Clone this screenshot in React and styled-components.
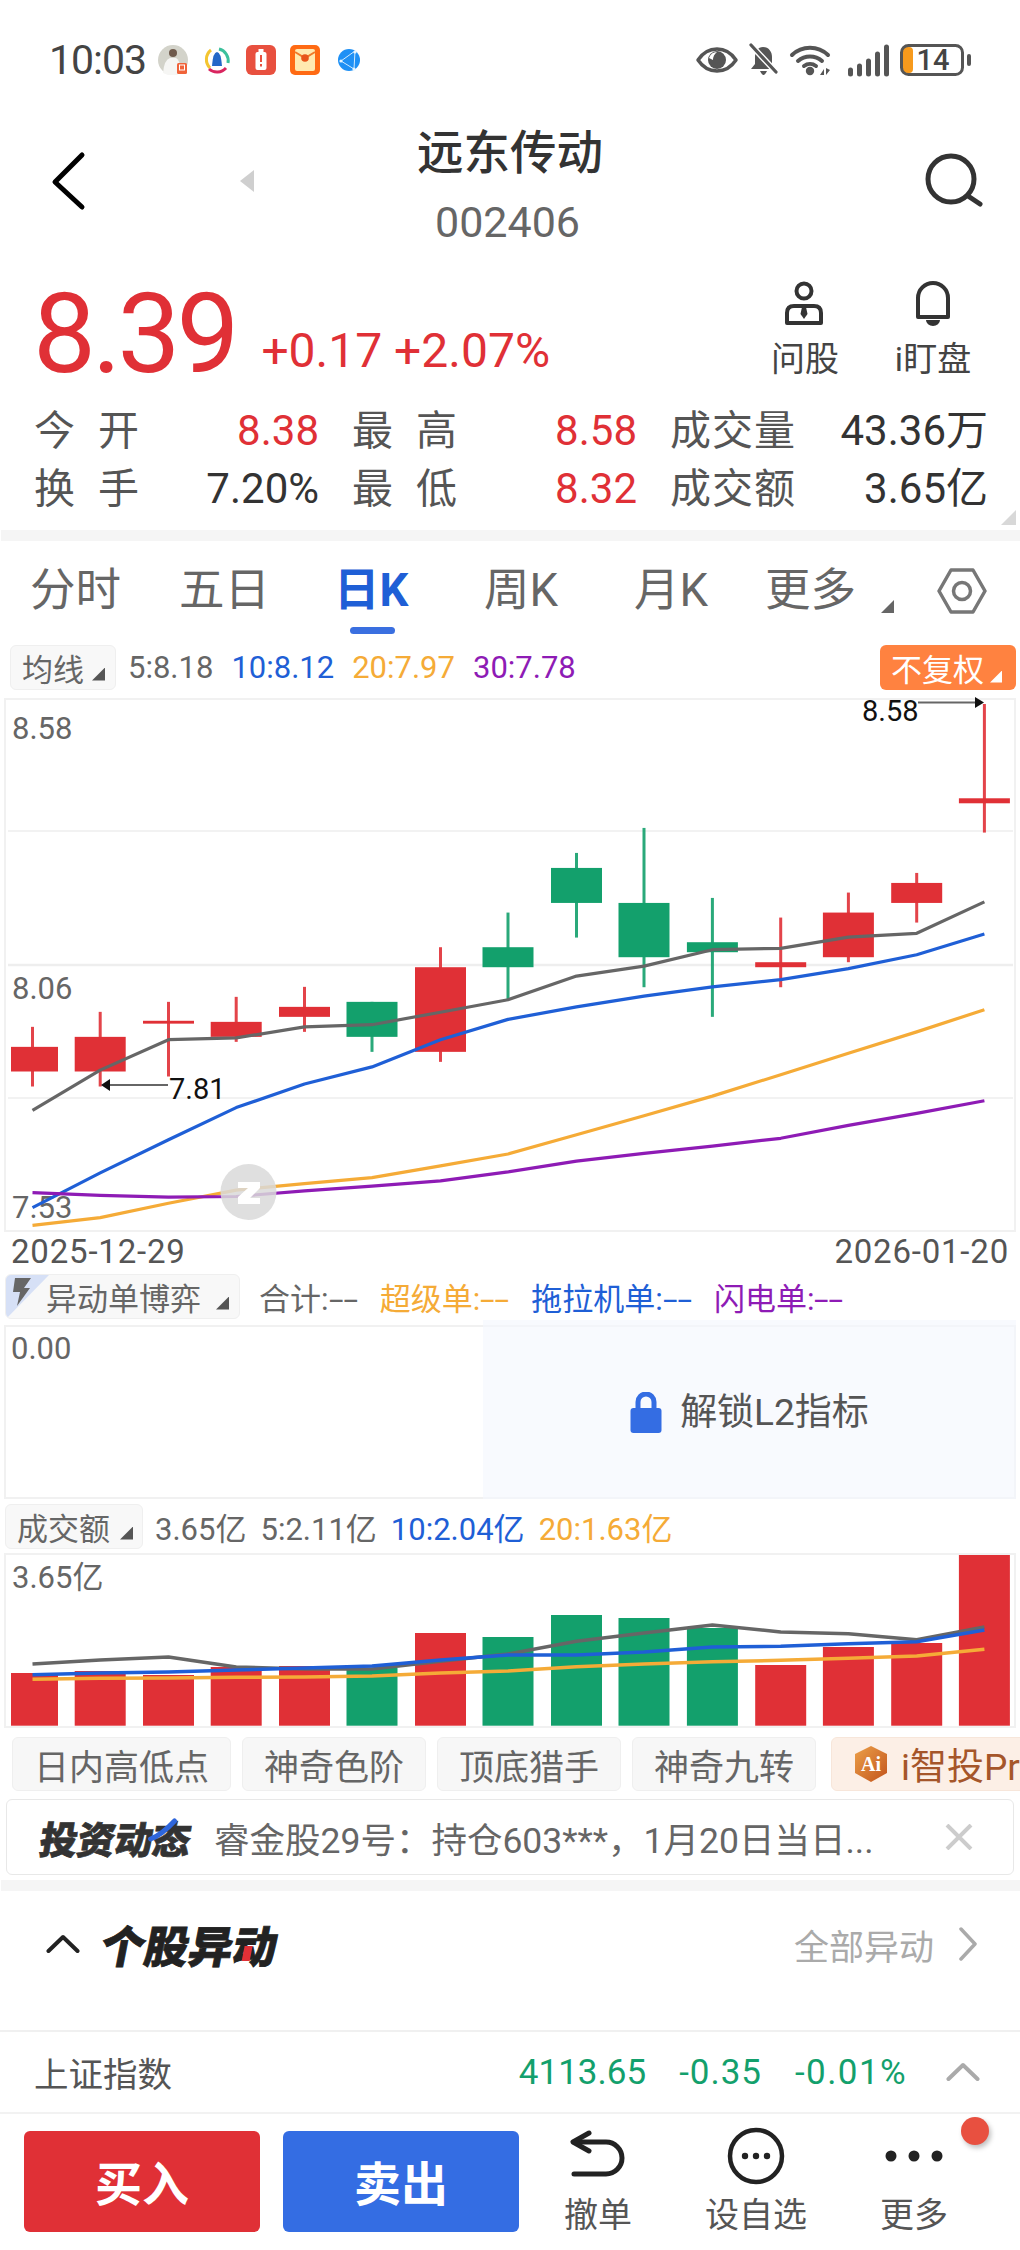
import React from 'react'
import styled, { createGlobalStyle } from 'styled-components'

const RED = '#e03036'
const GREEN = '#13a06c'
const BLUE = '#1f5fd6'
const ORANGE = '#f5ab37'
const PURPLE = '#8e1bb5'

const GlobalStyle = createGlobalStyle`
  html, body { margin: 0; padding: 0; background: #fff; }
  body { font-family: Roboto, "Noto Sans CJK SC", sans-serif; color: #333; }
  * { box-sizing: border-box; }
`

const Page = styled.div`
  width: 1020px;
  height: 2250px;
  overflow: hidden;
  background: #fff;
`

const StatusBar = styled.div`
  height: 120px;
  display: flex;
  align-items: center;
  justify-content: space-between;
  padding: 0 48px 0 49px;
`
const StatusGroup = styled.div`
  display: flex;
  align-items: center;
  gap: ${p => p.$gap || 0}px;
  svg { overflow: visible; }
`
const Clock = styled.span`
  width: 102px;
  font-size: 41px;
  letter-spacing: -1px;
  color: #444;
`

const Header = styled.div`
  height: 122px;
  display: grid;
  grid-template-columns: 1fr auto 1fr;
`
const HeaderLeft = styled.div`
  display: flex;
  align-items: center;
  gap: 150px;
  padding-left: 50px;
`
const HeaderRight = styled.div`
  display: flex;
  align-items: center;
  justify-content: flex-end;
  padding-right: 35px;
`
const TitleBlock = styled.div`
  display: flex;
  flex-direction: column;
  align-items: center;
  padding-top: 10px;
`
const Title = styled.div`
  font-size: 46.5px;
  line-height: 46px;
  font-weight: 500;
  color: #333;
`
const Code = styled.div`
  margin-top: 27px;
  padding-right: 5px;
  font-size: 43px;
  line-height: 38px;
  color: #666;
`

const PriceRow = styled.div`
  height: 159px;
  display: flex;
  padding: 0 27px 0 33px;
`
const Price = styled.div`
  margin-top: 37px;
  font-size: 112px;
  line-height: 110px;
  letter-spacing: -4px;
  color: ${RED};
`
const Change = styled.div`
  margin: 84px 0 0 26px;
  font-size: 48px;
  line-height: 50px;
  color: ${RED};
`
const Actions = styled.div`
  margin-left: auto;
  display: flex;
  gap: 8px;
  padding-top: 39px;
`
const Action = styled.div`
  width: 120px;
  display: flex;
  flex-direction: column;
  align-items: center;
  font-size: 34px;
  line-height: 40px;
  color: #444;
  svg { margin-bottom: 12px; }
`

const Stats = styled.div`
  position: relative;
  height: 129px;
  padding: 1px 0 0 34px;
`
const StatsRow = styled.div`
  height: 58px;
  display: grid;
  grid-template-columns: 285px 285px 318px;
  gap: 33px;
  align-items: center;
`
const Stat = styled.div`
  display: flex;
  justify-content: space-between;
  align-items: center;
  line-height: 58px;
`
const StatLabel = styled.span`
  font-size: 41px;
  letter-spacing: ${p => p.$spread ? 23 : 1}px;
  color: #555;
`
const StatValue = styled.span`
  font-size: 42px;
  color: ${p => p.$red ? RED : '#333'};
`
const Corner = styled.i`
  position: absolute;
  right: 4px;
  bottom: 5px;
  width: 15px;
  height: 15px;
  background: #d8d8d8;
  clip-path: polygon(100% 0, 100% 100%, 0 100%);
`
const Band = styled.div`
  height: 11px;
  margin-top: ${p => p.$mt || 0}px;
  margin-left: 1px;
  background: #f5f5f5;
`

const Tabs = styled.div`
  height: 104px;
  padding: 20px 33px 0 30px;
  display: grid;
  grid-template-columns: 149px 155px 150px 150px 131px 1fr;
  align-items: start;
`
const Tab = styled.div`
  position: relative;
  width: fit-content;
  font-size: 45.5px;
  line-height: 60px;
  font-weight: ${p => p.$active ? 700 : 400};
  color: ${p => p.$active ? BLUE : '#666'};
  ${p => p.$active && `
    &::after {
      content: '';
      position: absolute;
      left: 16px;
      bottom: -13px;
      width: 45px;
      height: 7px;
      border-radius: 4px;
      background: #3a6fe0;
    }
  `}
`
const TabMore = styled.div`
  display: flex;
  align-items: center;
  justify-content: space-between;
  height: 60px;
`
const MoreLabel = styled.div`
  display: flex;
  align-items: flex-end;
  gap: 25px;
  font-size: 45.5px;
  line-height: 60px;
  color: #666;
`

const Caret = styled.i`
  flex: none;
  width: ${p => p.$size || 13}px;
  height: ${p => p.$size || 13}px;
  margin-bottom: ${p => p.$mb || 8}px;
  background: ${p => p.$color || '#555'};
  align-self: flex-end;
  clip-path: polygon(100% 0, 100% 100%, 0 100%);
`
const IndicatorRow = styled.div`
  height: 44px;
  margin-top: ${p => p.$mt || 0}px;
  padding: 0 4px 0 ${p => p.$pl || 5}px;
  display: flex;
  align-items: center;
  gap: ${p => p.$gap || 18}px;
  font-size: 31px;
`
const Pill = styled.div`
  position: relative;
  height: 45px;
  overflow: hidden;
  display: flex;
  align-items: center;
  gap: ${p => p.$gap || 12}px;
  padding: 0 ${p => p.$pr || 10}px 0 ${p => p.$pl || 11}px;
  margin-right: ${p => p.$mr || 0}px;
  background: #f8f8f8;
  border: 1px solid #efefef;
  border-radius: 6px;
  color: #666;
  font-size: 31px;
`
const FlashMark = styled.svg`
  position: absolute;
  left: 0;
  top: 0;
`
const Reading = styled.span`
  color: ${p => p.$color || '#666'};
  white-space: nowrap;
`
const Dash = styled.span`
  display: inline-block;
  margin-right: 12px;
  transform: scaleX(1.7);
  transform-origin: left center;
`
const AdjustButton = styled.div`
  margin-left: auto;
  width: 136px;
  height: 45px;
  display: flex;
  align-items: center;
  gap: 6px;
  padding-left: 11px;
  border-radius: 6px;
  background: #ff8240;
  color: #fff;
  font-size: 31px;
`

const ChartSvg = styled.svg`
  display: block;
  overflow: visible;
  margin: 9px 0 0 4px;
`
const DateRow = styled.div`
  height: 38px;
  padding: 1px 11px 0;
  display: flex;
  align-items: center;
  justify-content: space-between;
  font-size: 33px;
  letter-spacing: .8px;
  color: #555;
`

const LockedBox = styled.div`
  position: relative;
  height: 174px;
  margin: 7px 4px 0;
  border: 2px solid #f1f1f1;
  padding: 7px 5px;
  font-size: 31px;
  line-height: 30px;
  color: #666;
`
const LockPanel = styled.div`
  position: absolute;
  top: -7px;
  right: -2px;
  bottom: -2px;
  width: 533px;
  background: rgba(244, 247, 254, .65);
  display: flex;
  align-items: center;
  justify-content: center;
  gap: 18px;
  padding-top: 7px;
  font-size: 37px;
  color: #555;
`
const VolumeSvg = styled.svg`
  display: block;
  margin: 5px 0 0 4px;
`

const ToolRow = styled.div`
  height: 54px;
  margin-top: 9px;
  padding-left: 12px;
  display: flex;
  gap: 11px;
  overflow: hidden;
`
const ToolButton = styled.div`
  flex: none;
  min-width: ${p => p.$w}px;
  display: flex;
  align-items: center;
  justify-content: center;
  background: #f7f7f7;
  border: 1px solid #efefef;
  border-radius: 6px;
  font-size: 35px;
  color: #666;
`
const ProButton = styled.div`
  flex: none;
  width: 230px;
  margin-left: 4px;
  padding-left: 21px;
  display: flex;
  align-items: center;
  gap: 12px;
  background: #fcefe6;
  border: 1px solid #f7e6da;
  border-radius: 6px;
  font-size: 37px;
  color: #a5562a;
  white-space: nowrap;
`

const NewsBar = styled.div`
  height: 76px;
  margin: 8px 6px 0;
  padding: 0 40px 0 29px;
  display: flex;
  align-items: center;
  border: 1px solid #e8e8e8;
  border-radius: 6px;
`
const LogoText = styled.div`
  position: relative;
  width: 178px;
  font-size: 38px;
  font-weight: 900;
  letter-spacing: -.4px;
  color: #333;
  -webkit-text-stroke: .7px #333;
  transform: skewX(-9deg);
  transform-origin: left bottom;
`
const Swoosh = styled.svg`
  position: absolute;
  left: 106px;
  top: 8px;
  transform: skewX(9deg);
`
const NewsText = styled.div`
  flex: 1;
  font-size: 35.5px;
  color: #666;
  white-space: nowrap;
`

const SectionHead = styled.div`
  height: 141px;
  padding: 23px 42px 0 46px;
  display: flex;
  align-items: flex-start;
  border-bottom: 2px solid #f0f0f0;
`
const HeadLeft = styled.div`
  display: flex;
  align-items: center;
  gap: 22px;
  height: 60px;
`
const HeadTitle = styled.div`
  position: relative;
  font-size: 44px;
  font-weight: 900;
  color: #222;
  -webkit-text-stroke: .8px #222;
  transform: skewX(-11deg);
`
const RedTick = styled.i`
  position: absolute;
  left: 143px;
  top: 34px;
  width: 8px;
  height: 15px;
  background: ${RED};
`
const HeadRight = styled.div`
  margin-left: auto;
  height: 60px;
  display: flex;
  align-items: center;
  gap: 24px;
  font-size: 35px;
  color: #aaa;
`

const IndexRow = styled.div`
  height: 82px;
  padding: 0 40px 0 34px;
  display: flex;
  align-items: center;
  gap: 33px;
  border-bottom: 2px solid #f2f2f2;
`
const IndexName = styled.div`
  margin-right: auto;
  font-size: 34.5px;
  color: #555;
`
const IndexValue = styled.div`
  font-size: 35px;
  letter-spacing: ${p => p.$ls || 0}px;
  color: ${GREEN};
`
const IndexCaret = styled.div`
  display: flex;
  margin-left: 6px;
`

const BottomBar = styled.div`
  padding: 17px 0 0 24px;
  display: flex;
  gap: 23px;
`
const TradeButton = styled.div`
  width: 236px;
  height: 101px;
  padding-bottom: 2px;
  display: flex;
  align-items: center;
  justify-content: center;
  border-radius: 6px;
  background: ${p => p.$sell ? '#346de3' : RED};
  color: #fff;
  font-size: 47px;
  font-weight: 700;
`
const BarTools = styled.div`
  margin: -7px 0 0 -23px;
  display: grid;
  grid-template-columns: repeat(3, 158px);
`
const BarTool = styled.div`
  position: relative;
  display: flex;
  flex-direction: column;
  align-items: center;
  font-size: 34px;
  line-height: 40px;
  color: #555;
  svg { margin-bottom: 7px; }
`
const RedDot = styled.i`
  position: absolute;
  right: 4px;
  top: -7px;
  width: 28px;
  height: 28px;
  border-radius: 50%;
  background: #e85040;
  box-shadow: 2px 3px 5px rgba(0, 0, 0, .25);
`

// chart data read off the reference, in zoom units
const cy = v => 690 + v / 2.8
const vy = v => 1250 + v / 3
const centers = [32.5, 100.2, 168.5, 236.2, 304.5, 372, 440.5, 508, 576.5, 644, 712.4, 780.7, 848.4, 916.7, 984.4]

const candles = [
  [946, 1113, 1002, 1071, 'r'], [904, 1113, 974, 1071, 'r'], [876, 1085, 929, 937, 'r'],
  [862, 988, 932, 974, 'r'], [834, 960, 890, 918, 'r'], [876, 1016, 876, 974, 'g'],
  [723, 1044, 779, 1016, 'r'], [626, 870, 723, 779, 'g'], [459, 696, 501, 599, 'g'],
  [389, 835, 599, 751, 'g'], [585, 918, 709, 737, 'g'], [640, 835, 765, 779, 'r'],
  [570, 765, 626, 751, 'r'], [515, 654, 543, 599, 'r'], [42, 402, 306, 320, 'r'],
]
const ma5 = [1180, 1067, 982, 977, 946, 940, 905, 870, 804, 776, 730, 726, 695, 684, 596]
const ma10 = [1452, 1355, 1262, 1172, 1106, 1058, 982, 925, 890, 860, 834, 814, 783, 744, 686]
const ma20 = [1502, 1480, 1440, 1403, 1385, 1368, 1335, 1302, 1248, 1195, 1140, 1080, 1020, 960, 898]
const ma30 = [1410, 1418, 1423, 1421, 1405, 1392, 1377, 1352, 1322, 1300, 1280, 1258, 1222, 1188, 1153]

const volumes = [1275, 1269, 1281, 1257, 1254, 1260, 1155, 1167, 1101, 1110, 1140, 1251, 1197, 1185, 921]
const volColors = 'rrrrrgrggggrrrr'
const vol5 = [1248, 1236, 1227, 1257, 1263, 1263, 1240, 1218, 1180, 1155, 1131, 1152, 1157, 1175, 1137]
const vol10 = [1280, 1275, 1272, 1266, 1260, 1254, 1236, 1221, 1221, 1212, 1197, 1195, 1187, 1181, 1146]
const vol20 = [1294, 1291, 1290, 1288, 1287, 1284, 1275, 1269, 1256, 1248, 1241, 1237, 1231, 1224, 1204]

const line = (data, fn) => data.map((v, i) => `${centers[i]},${fn(v).toFixed(1)}`).join(' ')
const colorOf = c => (c === 'g' ? GREEN : RED)

function bodyRect(i) {
  return i === 0 ? { x: 11, width: 47 } : { x: centers[i] - 25.5, width: 51 }
}

function MaLine({ data, color, fn, width = 3.2 }) {
  return <polyline points={line(data, fn)} fill="none" stroke={color} strokeWidth={width} strokeLinejoin="round" />
}

function KChart() {
  return (
    <ChartSvg width="1012" height="534" viewBox="4 699 1012 534">
      <rect x="5" y="700" width="1010" height="532" fill="#fff" stroke="#f1f1f1" strokeWidth="2" />
      <line x1="8" x2="1013" y1="832" y2="832" stroke="#eee" strokeWidth="1.5" />
      <line x1="8" x2="1013" y1="966" y2="966" stroke="#eee" strokeWidth="2.5" />
      <line x1="8" x2="1013" y1="1099" y2="1099" stroke="#eee" strokeWidth="1.5" />
      <text x="12" y="740" fontSize="31" fill="#666">8.58</text>
      <text x="12" y="1000" fontSize="31" fill="#666">8.06</text>
      <text x="12" y="1219" fontSize="31" fill="#666">7.53</text>
      {candles.map(([wt, wb, bt, bb, c], i) => (
        <g key={i} fill={colorOf(c)}>
          <rect x={centers[i] - 1.5} y={cy(wt)} width="3" height={cy(wb) - cy(wt)} opacity=".9" />
          <rect {...bodyRect(i)} y={cy(bt)} height={cy(bb) - cy(bt)} />
        </g>
      ))}
      <MaLine data={ma5} color="#666" fn={cy} />
      <MaLine data={ma10} color={BLUE} fn={cy} />
      <MaLine data={ma20} color={ORANGE} fn={cy} />
      <MaLine data={ma30} color={PURPLE} fn={cy} />
      <text x="862" y="722" fontSize="29" fill="#111">8.58</text>
      <line x1="918" x2="976" y1="703.5" y2="703.5" stroke="#666" strokeWidth="2" />
      <polygon points="975,698 984,703.5 975,709" fill="#111" />
      <text x="169" y="1100" fontSize="29" fill="#111">7.81</text>
      <line x1="110" x2="168" y1="1086" y2="1086" stroke="#666" strokeWidth="2" />
      <polygon points="110,1080 101,1086 110,1092" fill="#111" />
      <circle cx="248.5" cy="1193" r="28" fill="#d9d9d9" opacity=".85" />
      <path d="M238 1183 H260 V1189 L250 1199 H260 V1205 H238 V1198 L248 1189 H238 Z" fill="#fff" />
    </ChartSvg>
  )
}

function VolumeChart() {
  return (
    <VolumeSvg width="1012" height="175" viewBox="4 1555 1012 175">
      <rect x="5" y="1556" width="1010" height="173" fill="#fff" stroke="#f1f1f1" strokeWidth="2" />
      <text x="12" y="1590" fontSize="31" fill="#666">3.65亿</text>
      {volumes.map((v, i) => (
        <rect key={i} {...bodyRect(i)} y={vy(v)} height={1727.7 - vy(v)} fill={colorOf(volColors[i])} />
      ))}
      <MaLine data={vol5} color="#666" fn={vy} width={3.5} />
      <MaLine data={vol10} color={BLUE} fn={vy} width={3.5} />
      <MaLine data={vol20} color={ORANGE} fn={vy} width={3.5} />
    </VolumeSvg>
  )
}

function LeftStatusIcons() {
  return (
    <>
      <svg width="44" height="32" viewBox="0 0 44 32">
        <circle cx="22" cy="16" r="15" fill="#d3d3ca" />
        <path d="M12 29 Q13 16 19 14 H25 Q29 16 30 27 L26 31 H17 Z" fill="#f6f6f4" />
        <circle cx="22" cy="9" r="4" fill="#6f5a4c" />
        <rect x="26" y="19" width="10" height="11" rx="1.5" fill="#f0633a" />
        <rect x="28.5" y="21" width="5" height="5" fill="none" stroke="#fff" strokeWidth="1" />
      </svg>
      <svg width="44" height="32" viewBox="0 0 44 32">
        <path d="M16 6 A12 12 0 0 0 15 24" fill="none" stroke="#f4c531" strokeWidth="3" />
        <path d="M24 5 A12 12 0 0 1 33 19" fill="none" stroke="#3cc09c" strokeWidth="3" />
        <path d="M14 25 A12 12 0 0 0 31 24" fill="none" stroke="#d9255f" strokeWidth="3" />
        <path d="M17 22 Q18 8 22 8 Q26 8 27 22 Z" fill="#2468c8" />
      </svg>
      <svg width="44" height="32" viewBox="0 0 44 32">
        <rect x="7" y="1" width="30" height="30" rx="6" fill="#e8503f" />
        <rect x="16.5" y="8" width="11" height="18" rx="2" fill="#fff" />
        <rect x="19.5" y="5" width="5" height="3" fill="#fff" />
        <rect x="21" y="11" width="2" height="7" fill="#e8503f" />
        <rect x="21" y="20" width="2" height="2.5" fill="#e8503f" />
      </svg>
      <svg width="44" height="32" viewBox="0 0 44 32">
        <rect x="7" y="1" width="30" height="30" rx="5" fill="#ff6a13" />
        <rect x="12" y="5" width="20" height="22" rx="2" fill="#ffe9b0" />
        <path d="M12 8 L22 14 L32 8" fill="none" stroke="#f07a2a" strokeWidth="2" />
        <circle cx="22" cy="14" r="3.8" fill="#e8541a" />
      </svg>
      <svg width="44" height="32" viewBox="0 0 44 32">
        <circle cx="22" cy="16" r="11" fill="#1e90f5" />
        <path d="M28 7 L14 17 L27 25 Z" fill="none" stroke="#cfeaff" strokeWidth="1" />
        <circle cx="14" cy="17" r="1.6" fill="#e6f5ff" />
        <circle cx="27" cy="25" r="1.6" fill="#e6f5ff" />
        <circle cx="28" cy="8" r="1.6" fill="#e6f5ff" />
      </svg>
    </>
  )
}

function RightStatusIcons() {
  return (
    <>
      <svg width="42" height="26" viewBox="0 0 42 26">
        <path d="M2 13 C8 4 15 2 21 2 C27 2 34 4 40 13 C34 22 27 24 21 24 C15 24 8 22 2 13 Z" fill="#fff" stroke="#555" strokeWidth="3.5" strokeLinejoin="round" />
        <circle cx="21" cy="13" r="9" fill="#555" />
        <path d="M13 11 Q15 5 21 5 Q17 8 17 13 Z" fill="#fff" />
      </svg>
      <svg width="29" height="32" viewBox="0 0 29 32">
        <path d="M14 3 C20 3 23 8 23 13 V20 L27 25 H2 L6 20 V13 C6 8 9 3 14 3 Z M11 27 H18 Q16 31 14.5 31 Q13 31 11 27 Z" fill="#555" />
        <line x1="1" y1="0" x2="28" y2="29" stroke="#fff" strokeWidth="6" />
        <line x1="2" y1="1" x2="27" y2="28" stroke="#555" strokeWidth="3.2" strokeLinecap="round" />
      </svg>
      <svg width="48" height="31" viewBox="0 0 48 31">
        <g fill="none" stroke="#555" strokeWidth="4" strokeLinecap="round">
          <path d="M3 10 A26 26 0 0 1 39 10" />
          <path d="M9 16 A18 18 0 0 1 33 16" />
          <path d="M15 21 A10 10 0 0 1 27 21" />
        </g>
        <circle cx="21" cy="26" r="4.2" fill="#555" />
        <path d="M31 30 H35 V24 Z M37 23 V30 L41 25 Z" fill="#555" />
      </svg>
      <svg width="41" height="33" viewBox="0 0 41 33">
        {[[0, 9], [9, 13], [18, 18], [27, 25], [36, 32]].map(([x, h]) => (
          <rect key={x} x={x} y={32.5 - h} width="5" height={h} rx="2.5" fill="#555" />
        ))}
      </svg>
      <svg width="72" height="32" viewBox="0 0 72 32">
        <rect x="3" y="3" width="10" height="26" rx="4" fill="#f79a1c" />
        <rect x="1.5" y="1.5" width="61" height="29" rx="7" fill="none" stroke="#555" strokeWidth="3" />
        <text x="33" y="26" fontSize="29" fontWeight="500" textAnchor="middle" fill="#444">14</text>
        <rect x="67" y="10" width="4" height="12" rx="2" fill="#555" />
      </svg>
    </>
  )
}

const Up = ({ color = '#222', w = 34, h = 20 }) => (
  <svg width={w} height={h} viewBox={`0 0 ${w} ${h}`}>
    <path d={`M2.5 ${h - 3} L${w / 2} 3 L${w - 2.5} ${h - 3}`} fill="none" stroke={color} strokeWidth="4" strokeLinecap="round" strokeLinejoin="round" />
  </svg>
)

export default function App() {
  return (
    <Page>
      <GlobalStyle />
      <StatusBar>
        <StatusGroup>
          <Clock>10:03</Clock>
          <LeftStatusIcons />
        </StatusGroup>
        <StatusGroup $gap={11}>
          <RightStatusIcons />
        </StatusGroup>
      </StatusBar>

      <Header>
        <HeaderLeft>
          <svg width="40" height="60" viewBox="0 0 40 60">
            <polyline points="32,4 5,31 32,56" fill="none" stroke="#000" strokeWidth="5" strokeLinecap="round" strokeLinejoin="round" />
          </svg>
          <svg width="14" height="22" viewBox="0 0 14 22">
            <polygon points="14,0 14,22 0,11" fill="#cfcfcf" />
          </svg>
        </HeaderLeft>
        <TitleBlock>
          <Title>远东传动</Title>
          <Code>002406</Code>
        </TitleBlock>
        <HeaderRight>
          <svg width="62" height="56" viewBox="0 0 62 56">
            <circle cx="28" cy="26" r="23" fill="none" stroke="#333" strokeWidth="5" />
            <line x1="45" y1="43" x2="57" y2="51" stroke="#333" strokeWidth="5" strokeLinecap="round" />
          </svg>
        </HeaderRight>
      </Header>

      <PriceRow>
        <Price>8.39</Price>
        <Change>+0.17 +2.07%</Change>
        <Actions>
          <Action>
            <svg width="46" height="46" viewBox="0 0 46 46">
              <circle cx="22" cy="10" r="7.5" fill="none" stroke="#333" strokeWidth="4" />
              <path d="M5 42 V32 Q5 25 12 25 H32 Q39 25 39 32 V42 Z" fill="none" stroke="#333" strokeWidth="4" strokeLinejoin="round" />
              <path d="M20 26 H24 L25.5 33 L22 38 L18.5 33 Z" fill="#333" />
            </svg>
            问股
          </Action>
          <Action>
            <svg width="46" height="46" viewBox="0 0 46 46">
              <path d="M8 36 V17 a15 15 0 0 1 30 0 V36 Z" fill="none" stroke="#333" strokeWidth="4" strokeLinejoin="round" />
              <path d="M16 39 H30 A7 6 0 0 1 16 39 Z" fill="#333" />
            </svg>
            i盯盘
          </Action>
        </Actions>
      </PriceRow>

      <Stats>
        <StatsRow>
          <Stat><StatLabel $spread>今开</StatLabel><StatValue $red>8.38</StatValue></Stat>
          <Stat><StatLabel $spread>最高</StatLabel><StatValue $red>8.58</StatValue></Stat>
          <Stat><StatLabel>成交量</StatLabel><StatValue>43.36万</StatValue></Stat>
        </StatsRow>
        <StatsRow>
          <Stat><StatLabel $spread>换手</StatLabel><StatValue>7.20%</StatValue></Stat>
          <Stat><StatLabel $spread>最低</StatLabel><StatValue $red>8.32</StatValue></Stat>
          <Stat><StatLabel>成交额</StatLabel><StatValue>3.65亿</StatValue></Stat>
        </StatsRow>
        <Corner />
      </Stats>
      <Band />

      <Tabs>
        <Tab>分时</Tab>
        <Tab>五日</Tab>
        <Tab $active>日K</Tab>
        <Tab>周K</Tab>
        <Tab>月K</Tab>
        <TabMore>
          <MoreLabel>更多<Caret $color="#666" $mb={8} /></MoreLabel>
          <svg width="50" height="46" viewBox="0 0 50 46">
            <polygon points="2,23 14,2 36,2 48,23 36,44 14,44" fill="none" stroke="#777" strokeWidth="3.5" strokeLinejoin="round" />
            <circle cx="25" cy="23" r="8.5" fill="none" stroke="#777" strokeWidth="3.5" />
          </svg>
        </TabMore>
      </Tabs>

      <IndicatorRow $pl={10}>
        <Pill $mr={-6} $gap={8}>均线<Caret /></Pill>
        <Reading>5:8.18</Reading>
        <Reading $color={BLUE}>10:8.12</Reading>
        <Reading $color={ORANGE}>20:7.97</Reading>
        <Reading $color={PURPLE}>30:7.78</Reading>
        <AdjustButton>不复权<Caret $color="#fff" $size={12} $mb={7} /></AdjustButton>
      </IndicatorRow>

      <KChart />
      <DateRow>
        <span>2025-12-29</span>
        <span>2026-01-20</span>
      </DateRow>

      <IndicatorRow $mt={4} $gap={22}>
        <Pill $pl={40} $pr={10} $gap={15} $mr={-3}>
          <FlashMark width="44" height="45" viewBox="0 0 44 45">
            <polygon points="0,0 43,0 0,44" fill="#d6e0f6" />
            <path d="M9 3 H25 L18 13 H24 L11 31 L14 17 H7 Z" fill="#666" />
          </FlashMark>
          异动单博弈<Caret />
        </Pill>
        <Reading>合计:<Dash>--</Dash></Reading>
        <Reading $color={ORANGE}>超级单:<Dash>--</Dash></Reading>
        <Reading $color={BLUE}>拖拉机单:<Dash>--</Dash></Reading>
        <Reading $color={PURPLE}>闪电单:<Dash>--</Dash></Reading>
      </IndicatorRow>

      <LockedBox>
        0.00
        <LockPanel>
          <svg width="32" height="42" viewBox="0 0 32 42">
            <path d="M8 18 V10 a8 8 0 0 1 16 0 V18" fill="none" stroke="#346de3" strokeWidth="5" />
            <rect x="0.5" y="16" width="31" height="25" rx="3" fill="#346de3" />
          </svg>
          解锁L2指标
        </LockPanel>
      </LockedBox>

      <IndicatorRow $mt={5} $gap={14}>
        <Pill $pr={9} $gap={10} $mr={-2}>成交额<Caret /></Pill>
        <Reading>3.65亿</Reading>
        <Reading>5:2.11亿</Reading>
        <Reading $color={BLUE}>10:2.04亿</Reading>
        <Reading $color={ORANGE}>20:1.63亿</Reading>
      </IndicatorRow>

      <VolumeChart />

      <ToolRow>
        <ToolButton $w={219}>日内高低点</ToolButton>
        <ToolButton $w={184}>神奇色阶</ToolButton>
        <ToolButton $w={184}>顶底猎手</ToolButton>
        <ToolButton $w={184}>神奇九转</ToolButton>
        <ProButton>
          <svg width="36" height="36" viewBox="0 0 36 36">
            <defs>
              <linearGradient id="aiFill" x1="0" y1="0" x2="1" y2="1">
                <stop offset="0" stopColor="#eca049" />
                <stop offset="1" stopColor="#c2541c" />
              </linearGradient>
            </defs>
            <polygon points="18,0 34,8 34,27 18,36 2,27 2,8" fill="url(#aiFill)" />
            <text x="18" y="25" fontSize="20" fontWeight="700" textAnchor="middle" fill="#fff" fontFamily="Liberation Serif, serif">Ai</text>
          </svg>
          i智投Pro
        </ProButton>
      </ToolRow>

      <NewsBar>
        <LogoText>
          投资动态
          <Swoosh width="30" height="24" viewBox="0 0 30 24">
            <path d="M3 21 Q14 17 27 3" fill="none" stroke="#2e66dc" strokeWidth="5" strokeLinecap="round" />
          </Swoosh>
        </LogoText>
        <NewsText>睿金股29号：持仓603***，1月20日当日...</NewsText>
        <svg width="28" height="26" viewBox="0 0 28 26">
          <path d="M2 1 L26 25 M26 1 L2 25" stroke="#ccc" strokeWidth="4" />
        </svg>
      </NewsBar>
      <Band $mt={5} />

      <SectionHead>
        <HeadLeft>
          <Up />
          <HeadTitle>个股异动<RedTick /></HeadTitle>
        </HeadLeft>
        <HeadRight>
          全部异动
          <svg width="20" height="34" viewBox="0 0 20 34">
            <polyline points="3,2 17,17 3,32" fill="none" stroke="#aaa" strokeWidth="3.5" strokeLinecap="round" strokeLinejoin="round" />
          </svg>
        </HeadRight>
      </SectionHead>

      <IndexRow>
        <IndexName>上证指数</IndexName>
        <IndexValue>4113.65</IndexValue>
        <IndexValue $ls={1}>-0.35</IndexValue>
        <IndexValue $ls={1.4}>-0.01%</IndexValue>
        <IndexCaret><Up color="#aaa" /></IndexCaret>
      </IndexRow>

      <BottomBar>
        <TradeButton>买入</TradeButton>
        <TradeButton $sell>卖出</TradeButton>
        <BarTools>
          <BarTool>
            <svg width="60" height="64" viewBox="0 0 60 64">
              <path d="M6 18 H38 A16 16 0 0 1 38 50 H6" fill="none" stroke="#222" strokeWidth="5" strokeLinecap="round" />
              <path d="M21 9 L5 18 L21 27" fill="none" stroke="#222" strokeWidth="5" strokeLinecap="round" strokeLinejoin="round" />
            </svg>
            撤单
          </BarTool>
          <BarTool>
            <svg width="60" height="64" viewBox="0 0 60 64">
              <circle cx="30" cy="32" r="26" fill="none" stroke="#222" strokeWidth="4.5" />
              <circle cx="19" cy="32" r="3.2" fill="#222" />
              <circle cx="30" cy="32" r="3.2" fill="#222" />
              <circle cx="41" cy="32" r="3.2" fill="#222" />
            </svg>
            设自选
          </BarTool>
          <BarTool>
            <svg width="60" height="64" viewBox="0 0 60 64">
              <circle cx="7" cy="32" r="5.5" fill="#222" />
              <circle cx="30" cy="32" r="5.5" fill="#222" />
              <circle cx="53" cy="32" r="5.5" fill="#222" />
            </svg>
            更多
            <RedDot />
          </BarTool>
        </BarTools>
      </BottomBar>
    </Page>
  )
}
